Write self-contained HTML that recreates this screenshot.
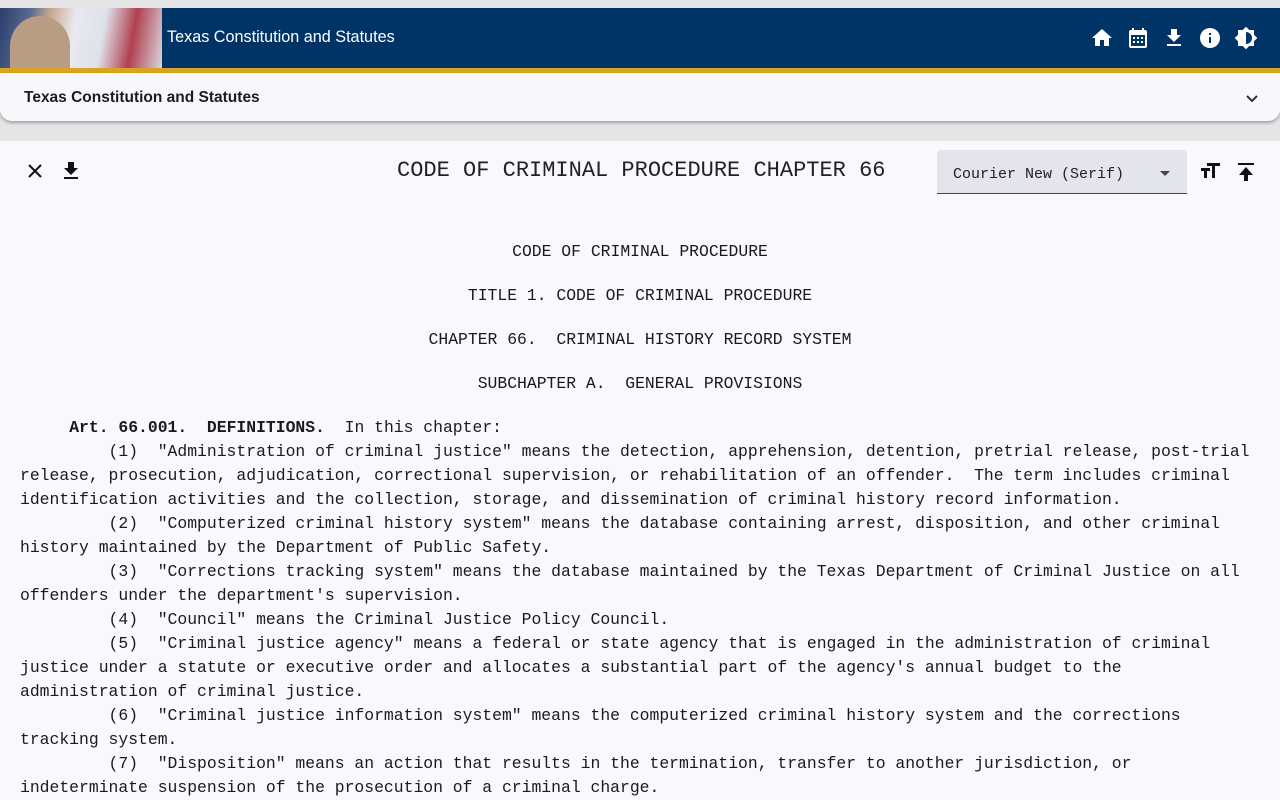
<!DOCTYPE html>
<html><head><meta charset="utf-8"><style>
*{margin:0;padding:0;box-sizing:border-box}
html,body{width:1280px;height:800px;overflow:hidden}
body{background:#e6e6e6;font-family:"Liberation Sans",sans-serif;position:relative}
.hdr{position:absolute;top:8px;left:0;width:1280px;height:60px;background:#003366}
.img{position:absolute;left:0;top:0;width:162px;height:60px;background:linear-gradient(100deg,#2a3f6e 0%,#5a6a90 18%,#c9a98f 30%,#e9e9ef 45%,#dfe2ea 62%,#b04050 80%,#d9d5dc 100%)}
.dome{position:absolute;left:10px;top:8px;width:60px;height:52px;border-radius:30px 30px 0 0;background:#b89c84}
.ht{position:absolute;left:167px;top:20px;color:#fff;font-size:16.2px}
.gold{position:absolute;top:68px;left:0;width:1280px;height:5px;background:#d9a51e}
.panel{position:absolute;top:73px;left:0;width:1280px;height:48px;background:#f8f8fc;border-radius:0 0 12px 12px;box-shadow:0 2px 3px rgba(0,0,0,.3)}
.pt{position:absolute;left:24px;top:16px;font-size:15.5px;font-weight:bold;color:#1c1c1c}
.content{position:absolute;top:141px;left:0;width:1280px;height:659px;background:#f9f9fd;overflow:hidden}
.title{position:absolute;left:397px;top:17px;font-family:"Liberation Mono",monospace;font-size:22px;color:#222;white-space:pre}
.sel{position:absolute;left:937px;top:9px;width:250px;height:44px;background:#e3e4ec;border-bottom:1px solid #444;border-radius:4px 4px 0 0}
.sel span{position:absolute;left:16px;top:16px;font-family:"Liberation Mono",monospace;font-size:15px;color:#222}
.m{font-family:"Liberation Mono",monospace;font-size:16.4px;line-height:24px;color:#1a1a1a}
.h{position:absolute;left:0;width:1280px;text-align:center;white-space:pre}
pre{position:absolute;left:20px;top:275px}
svg{position:absolute}
</style></head><body>
<div class="hdr"><div class="img"><div class="dome"></div></div><div class="ht">Texas Constitution and Statutes</div>
<svg style="left:1090px;top:18px" width="24" height="24" viewBox="0 0 24 24" fill="#fff"><path d="M10 20v-6h4v6h5v-8h3L12 3 2 12h3v8z"/></svg>
<svg style="left:1126px;top:18px" width="24" height="24" viewBox="0 0 24 24" fill="#fff"><path d="M19 4h-1V2h-2v2H8V2H6v2H5a2 2 0 00-2 2v14a2 2 0 002 2h14a2 2 0 002-2V6a2 2 0 00-2-2zm0 16H5V9h14zM7 11h2v2H7zm4 0h2v2h-2zm4 0h2v2h-2zM7 15h2v2H7zm4 0h2v2h-2zm4 0h2v2h-2z"/></svg>
<svg style="left:1162px;top:18px" width="24" height="24" viewBox="0 0 24 24" fill="#fff"><path d="M19 9h-4V3H9v6H5l7 7 7-7zM5 18v2h14v-2z"/></svg>
<svg style="left:1198px;top:18px" width="24" height="24" viewBox="0 0 24 24" fill="#fff"><path d="M12 2a10 10 0 100 20 10 10 0 000-20zm1 15h-2v-6h2zm0-8h-2V7h2z"/></svg>
<svg style="left:1234px;top:18px" width="24" height="24" viewBox="0 0 24 24" fill="#fff"><path d="M20 8.69V4h-4.69L12 .69 8.69 4H4v4.69L.69 12 4 15.31V20h4.69L12 23.31 15.31 20H20v-4.69L23.31 12 20 8.69zM12 18V6a6 6 0 010 12z"/></svg>
</div>
<div class="gold"></div>
<div class="panel"><div class="pt">Texas Constitution and Statutes</div>
<svg style="left:1240px;top:14px" width="24" height="24" viewBox="0 0 24 24"><path d="M7 9l5 5 5-5" stroke="#333" stroke-width="2" fill="none"/></svg></div>
<div class="content">
<svg style="left:23px;top:18px" width="24" height="24" viewBox="0 0 24 24"><path d="M6 6l12 12M18 6L6 18" stroke="#111" stroke-width="2"/></svg>
<svg style="left:59px;top:18px" width="24" height="24" viewBox="0 0 24 24" fill="#111"><path d="M19 9h-4V3H9v6H5l7 7 7-7zM5 18v2h14v-2z"/></svg>
<div class="title">CODE OF CRIMINAL PROCEDURE CHAPTER 66</div>
<div class="sel"><span>Courier New (Serif)</span><svg style="left:222px;top:20px" width="12" height="8" viewBox="0 0 12 8"><path d="M1 1h10L6 6z" fill="#444"/></svg></div>
<svg style="left:1198px;top:18px" width="24" height="24" viewBox="0 0 24 24" fill="#111"><path d="M9 4v3h5v12h3V7h5V4zM3 12h3v7h3v-7h3V9H3z"/></svg>
<svg style="left:1234px;top:18px" width="24" height="24" viewBox="0 0 24 24" fill="#111"><path d="M4 4h16v2H4zm1 12l7-8 7 8h-5v6h-4v-6z"/></svg>
<div class="m h" style="top:99px">CODE OF CRIMINAL PROCEDURE</div>
<div class="m h" style="top:143px">TITLE 1. CODE OF CRIMINAL PROCEDURE</div>
<div class="m h" style="top:187px">CHAPTER 66.  CRIMINAL HISTORY RECORD SYSTEM</div>
<div class="m h" style="top:231px">SUBCHAPTER A.  GENERAL PROVISIONS</div>
<pre class="m">     <b>Art. 66.001.  DEFINITIONS.</b>  In this chapter:
         (1)  "Administration of criminal justice" means the detection, apprehension, detention, pretrial release, post-trial
release, prosecution, adjudication, correctional supervision, or rehabilitation of an offender.  The term includes criminal
identification activities and the collection, storage, and dissemination of criminal history record information.
         (2)  "Computerized criminal history system" means the database containing arrest, disposition, and other criminal
history maintained by the Department of Public Safety.
         (3)  "Corrections tracking system" means the database maintained by the Texas Department of Criminal Justice on all
offenders under the department's supervision.
         (4)  "Council" means the Criminal Justice Policy Council.
         (5)  "Criminal justice agency" means a federal or state agency that is engaged in the administration of criminal
justice under a statute or executive order and allocates a substantial part of the agency's annual budget to the
administration of criminal justice.
         (6)  "Criminal justice information system" means the computerized criminal history system and the corrections
tracking system.
         (7)  "Disposition" means an action that results in the termination, transfer to another jurisdiction, or
indeterminate suspension of the prosecution of a criminal charge.</pre>
</div>
</body></html>
